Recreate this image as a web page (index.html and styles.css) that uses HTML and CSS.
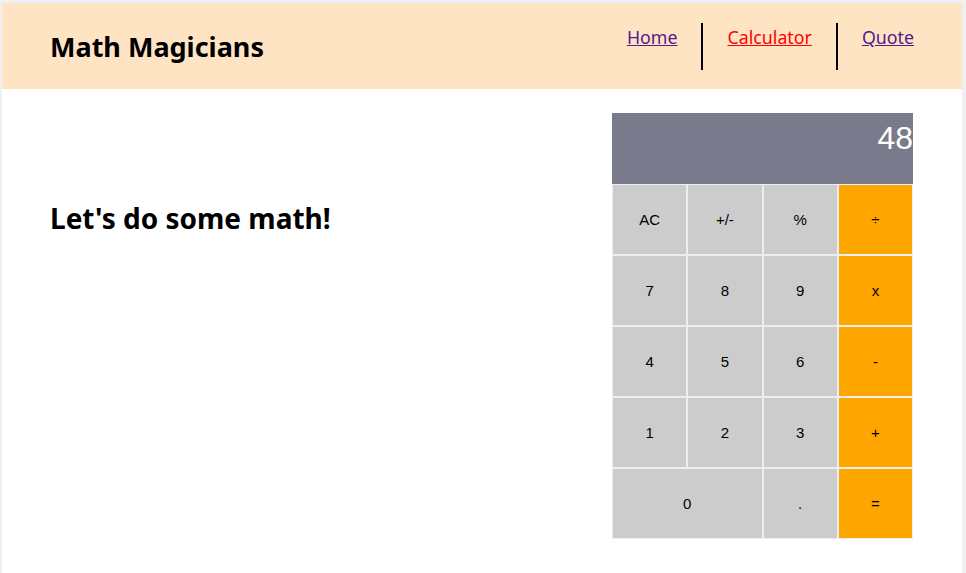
FILE: index.html
```html
<!DOCTYPE html>
<html lang="en">
<head>
<meta charset="utf-8">
<title>Math Magicians</title>
<link rel="stylesheet" href="styles.css">
</head>
<body>
<div class="page">
  <header class="header">
    <h1 class="logo">Math Magicians</h1>
    <nav>
      <ul class="nav">
        <li class="nav-item"><a class="nav-link visited" href="#home">Home</a></li>
        <li class="nav-item"><a class="nav-link active" href="#calculator">Calculator</a></li>
        <li class="nav-item"><a class="nav-link visited" href="#quote">Quote</a></li>
      </ul>
    </nav>
  </header>
  <main class="main">
    <h2 class="intro">Let's do some math!</h2>
    <div class="calculator">
      <div class="display">48</div>
      <button class="key">AC</button>
      <button class="key">+/-</button>
      <button class="key">%</button>
      <button class="key op">÷</button>
      <button class="key">7</button>
      <button class="key">8</button>
      <button class="key">9</button>
      <button class="key op">x</button>
      <button class="key">4</button>
      <button class="key">5</button>
      <button class="key">6</button>
      <button class="key op">-</button>
      <button class="key">1</button>
      <button class="key">2</button>
      <button class="key">3</button>
      <button class="key op">+</button>
      <button class="key zero">0</button>
      <button class="key">.</button>
      <button class="key op">=</button>
    </div>
  </main>
</div>
</body>
</html>
```

FILE: styles.css
```css
* { box-sizing: border-box; }

html, body {
  margin: 0;
  padding: 0;
  height: 100%;
}

body {
  background: #eff0f1;
  font-family: "Noto Sans", "Open Sans", sans-serif;
  overflow: hidden;
}

.page {
  margin: 3px 4px 0 2px;
  background: #fff;
  min-height: 570px;
}

.header {
  background: #ffe4c4;
  height: 86px;
  display: flex;
  justify-content: space-between;
  align-items: flex-start;
  padding: 0 48px 0 48px;
}

.logo {
  margin: 0;
  font-size: 27px;
  font-weight: 700;
  line-height: 88px;
  color: #000;
}

.nav {
  list-style: none;
  margin: 20px 0 0;
  padding: 0;
  display: flex;
}

.nav-item {
  height: 47px;
  padding: 2px 24px 0 24px;
  border-right: 2px solid #000;
  font-size: 17.8px;
  line-height: 24px;
}

.nav-item:last-child {
  border-right: none;
  padding-right: 0;
}

.nav-link.visited { color: #551a8b; }
.nav-link.active { color: #f00; }

.main {
  display: flex;
  justify-content: space-between;
  align-items: flex-start;
  padding: 24px 49px 32px 48px;
}

.intro {
  margin: 86px 0 0;
  font-size: 28px;
  font-weight: 700;
  line-height: 38px;
}

.calculator {
  width: 301px;
  display: grid;
  grid-template-columns: repeat(4, 1fr);
  grid-auto-rows: 71px;
}

.display {
  grid-column: span 4;
  background: #797a8b;
  color: #fff;
  font-family: "Liberation Sans", Arial, sans-serif;
  font-size: 32px;
  text-align: right;
  padding-top: 7px;
  line-height: 37px;
}

.key {
  margin: 0;
  border: 1px solid #eee;
  background: #ccc;
  font-family: "Liberation Sans", Arial, sans-serif;
  font-size: 15px;
  color: #000;
  padding: 0;
}

.key.op { background: #ffa500; }

.key.zero { grid-column: span 2; }
```
